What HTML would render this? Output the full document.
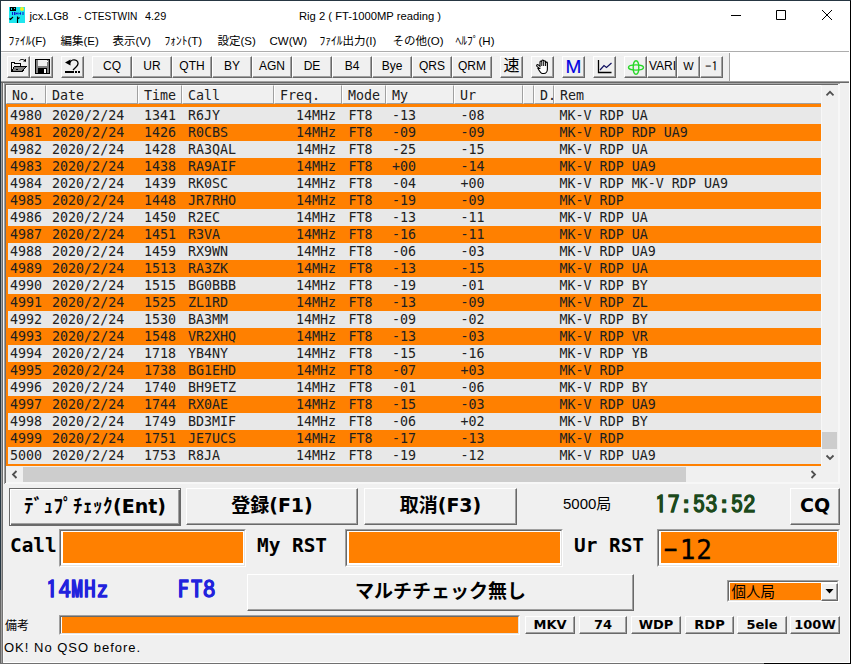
<!DOCTYPE html>
<html lang="ja"><head><meta charset="utf-8"><title>CTESTWIN</title>
<style>
*{box-sizing:border-box;margin:0;padding:0}
html,body{width:851px;height:664px;overflow:hidden;background:#f0f0f0}
body{position:relative;font-family:"Liberation Sans","Noto Sans CJK JP",sans-serif;font-size:12px;color:#000}
.abs{position:absolute}
#frame{position:absolute;left:0;top:0;width:851px;height:664px;border:1px solid #263642;border-right-color:#000;border-bottom-color:#000;pointer-events:none;z-index:50}
#frame2{position:absolute;left:1px;top:1px;width:849px;height:662px;border-right:1px solid #fff;border-bottom:1px solid #fff;z-index:49;pointer-events:none}
#le{position:absolute;left:1px;top:83px;width:3px;height:579px;background:linear-gradient(90deg,#a0a0a0 0 1px,#6c6c6c 1px 2px,#f4f4f4 2px 3px)}
#tbhl{position:absolute;left:1px;top:52px;width:729px;height:1px;background:#fff}
#lb{position:absolute;left:0;top:590px;width:4px;height:73px;z-index:60;background:linear-gradient(90deg,#666 0 1px,#a0a0a0 1px 2px,#737373 2px 3px,#fafafa 3px 4px)}
#bb{position:absolute;left:0;top:663px;width:764px;height:1px;z-index:61;background:#707070}
#title{position:absolute;left:1px;top:1px;width:849px;height:30px;background:#fff}
#title .t{position:absolute;top:7px;transform-origin:0 50%;font-size:11.500px;line-height:16px;white-space:pre;color:#000}
#menu{position:absolute;left:1px;top:31px;width:849px;height:20px;background:#fff}
#menu span{position:absolute;top:2px;line-height:16px;font-size:11.500px;transform-origin:0 50%;transform:translateX(0.500px);white-space:pre;color:#000}
#tbline{position:absolute;left:1px;top:51px;width:849px;height:1px;background:#adadad}
.tb{position:absolute;top:56px;height:22px;background:#f0f0f0;border:1px solid;border-color:#fff #696969 #696969 #fff;box-shadow:inset -1px -1px 0 #a0a0a0;font-size:12px;line-height:18px;text-align:center;color:#000;white-space:nowrap;overflow:hidden}
.ic{position:absolute;display:block;line-height:0}
#tbbg{position:absolute;left:1px;top:52px;width:729px;height:29px;background:#f0f0f0;border-right:1px solid #a0a0a0}
/* list */
#tbw{position:absolute;left:730px;top:52px;width:119px;height:29px;background:#fff}
#ln1{position:absolute;left:1px;top:81px;width:848px;height:2px;background:linear-gradient(#a0a0a0 50%,#686868 50%)}
#list{position:absolute;left:4px;top:83px;width:836px;height:401px;background:#f7f7f7;border-left:1px solid #a0a0a0;border-top:1px solid #a8a8a8}
#list2{position:absolute;left:5px;top:84px;width:833px;height:399px;background:#f7f7f7;border-left:1px solid #6c6c6c;border-top:1px solid #686868}
#lv{position:absolute;left:6px;top:85px;width:815px;height:381px;background:#ff8000;overflow:hidden;font-family:"DejaVu Sans Mono","Liberation Mono",monospace;font-size:13.33px;color:#202020}
#hdr{position:absolute;left:0;top:0;width:816px;height:19px;background:#f0f0f0}
.hc{position:absolute;top:0;height:19px;background:#f0f0f0;border:1px solid;border-color:#fff #a0a0a0 #a0a0a0 #fff;padding-left:5px;line-height:20px;white-space:pre;overflow:hidden}
.r{position:absolute;left:0;width:816px;height:17px;line-height:17px;white-space:pre}
.r.g{background:linear-gradient(#e8e8e8,#e8e8e8) 2px 0/100% 100% no-repeat}
.r span{position:absolute;top:0}
#vs{position:absolute;left:822px;top:85px;width:16px;height:381px;background:#f0f0f0}
#hs{position:absolute;left:6px;top:466px;width:816px;height:16px;background:#f0f0f0}
#corner{position:absolute;left:822px;top:466px;width:16px;height:16px;background:#f0f0f0}
.btn{position:absolute;background:#f0f0f0;border:1px solid;border-color:#fff #696969 #696969 #fff;box-shadow:inset -1px -1px 0 #a0a0a0,inset 1px 1px 0 #f0f0f0;text-align:center;white-space:nowrap;color:#000}
.big{font-family:"DejaVu Sans","Noto Sans CJK JP",sans-serif;font-weight:bold;font-size:19px}
.lab{position:absolute;font-family:"DejaVu Sans Mono","Liberation Mono",monospace;font-weight:bold;font-size:19.400px;line-height:24px;white-space:pre;color:#000}
.clk{font-family:"IPAGothic","Liberation Mono",monospace;font-weight:bold;font-size:23.500px;line-height:30px;white-space:pre;letter-spacing:0.900px;-webkit-text-stroke:0.250px currentColor}
.edit{position:absolute;background:#fff;border:1px solid;border-color:#a0a0a0 #fff #fff #a0a0a0}
.edit i{position:absolute;left:0;top:0;right:0;bottom:0;border:1px solid;border-color:#696969 #e3e3e3 #e3e3e3 #696969;display:block}
.edit b{position:absolute;background:#ff8000;display:block}
.sb{position:absolute;top:616px;height:18px;font-family:"DejaVu Sans","Liberation Sans",sans-serif;font-weight:bold;font-size:13px;line-height:15px}
</style></head><body>
<div id="title">
 <svg class="abs" style="left:8px;top:6px" width="16" height="16" viewBox="0 0 16 16"><rect width="16" height="16" fill="#1ee6ee"/><rect x="1" y="0" width="6" height="4" fill="#000"/><rect x="2" y="1" width="1" height="2" fill="#1ee6ee"/><rect x="5" y="1" width="1" height="1" fill="#1ee6ee"/><circle cx="13" cy="2" r="2" fill="#f0f020"/><path d="M3 5h1v3h-1zM5 5h1v3h-1zM6.500 5l2 1.500-2 1.500zM8.500 5.500h1v2h-1zM12 5l-2 1.500 2 1.500zM13.500 5h1v3h-1z" fill="#1010d0"/><path d="M0.5 11.5l1 1 2.5-2.5M8.5 9.5v6.5M8.5 12l2-1.5" stroke="#000" stroke-width="1.1" fill="none"/></svg>
 <span class="t" id="t1" style="left:28.500px">jcx.LG8</span><span class="t" id="t2" style="left:77.300px;transform:scaleX(0.885)">- CTESTWIN</span><span class="t" id="t3" style="left:143.700px;transform:scaleX(0.95)">4.29</span>
 <span class="t" id="t4" style="left:297.500px;transform:scaleX(0.976)">Rig 2 ( FT-1000MP reading )</span>
 <svg class="abs" style="left:711px;top:0" width="138" height="30" viewBox="0 0 138 30"><path d="M19 14.500h10M64.500 9.500h9v9h-9zM110 9l10 10M120 9l-10 10" stroke="#000" stroke-width="1" fill="none"/></svg>
</div>
<div id="menu">
 <span style="left:7px">ﾌｧｲﾙ(F)</span><span style="left:59px">編集(E)</span><span style="left:111px">表示(V)</span><span style="left:163px">ﾌｫﾝﾄ(T)</span><span style="left:216px">設定(S)</span><span style="left:268px">CW(W)</span><span style="left:318px">ﾌｧｲﾙ出力(I)</span><span style="left:391px">その他(O)</span><span style="left:454px">ﾍﾙﾌﾟ(H)</span>
</div>
<div id="tbline"></div>
<!-- toolbar -->
<div id="tbbg"></div>
<div class="tb" style="left:7px;width:23px"><span class="ic" style="left:3px;top:2px"><svg width="16" height="16" viewBox="0 0 16 16" shape-rendering="crispEdges"><path d="M0.5 12.5v-9h3v1h6v3" stroke="#000" fill="none"/><path d="M0.5 12.5l3-5h12l-4.5 5z" fill="#808080" stroke="#000"/><rect x="5" y="10" width="2" height="1" fill="#000"/><path d="M8.5 1.5c2-2 5-1 6 1" stroke="#000" fill="none" shape-rendering="auto"/><path d="M12 2.5h3v-3z" fill="#000" shape-rendering="auto"/></svg></span></div>
<div class="tb" style="left:30px;width:23px"><span class="ic" style="left:4px;top:2px"><svg width="16" height="16" viewBox="0 0 16 16" shape-rendering="crispEdges"><rect x="0.5" y="0.5" width="14" height="14" fill="#808080" stroke="#000"/><rect x="3" y="1" width="9" height="6" fill="#f0f0f0"/><rect x="12" y="2" width="1" height="1" fill="#fff"/><rect x="3" y="9" width="9" height="5" fill="#000"/><rect x="9" y="10" width="2" height="4" fill="#fff"/></svg></span></div>
<div class="tb" style="left:61px;width:23px"><span class="ic" style="left:3px;top:2px"><svg width="16" height="16" viewBox="0 0 16 16"><path d="M0 3.5l5.5-3v6z" fill="#000"/><path d="M5 3.5c1-2.5 4-3.5 6.500-2c2.500 2 1.500 4.500 0 6l-3.500 3.500" stroke="#000" stroke-width="1.3" fill="none"/><rect x="0" y="12" width="9" height="2" fill="#000"/><rect x="10" y="12" width="2" height="2" fill="#000"/><rect x="13" y="12" width="2" height="2" fill="#000"/></svg></span></div>
<div class="tb" style="left:92px;width:40px">CQ</div>
<div class="tb" style="left:132px;width:40px">UR</div>
<div class="tb" style="left:172px;width:40px">QTH</div>
<div class="tb" style="left:212px;width:40px">BY</div>
<div class="tb" style="left:252px;width:40px">AGN</div>
<div class="tb" style="left:292px;width:40px">DE</div>
<div class="tb" style="left:332px;width:40px">B4</div>
<div class="tb" style="left:372px;width:40px">Bye</div>
<div class="tb" style="left:412px;width:40px">QRS</div>
<div class="tb" style="left:452px;width:40px">QRM</div>
<div class="tb" style="left:500px;width:23px;font-size:16px;line-height:18px;font-family:'Liberation Sans','Noto Sans CJK JP',sans-serif">速</div>
<div class="tb" style="left:531px;width:23px"><span class="ic" style="left:3px;top:2px"><svg width="16" height="16" viewBox="0 0 16 16"><path d="M4.500 9.500l-2.500-2.200c-1-1 0.300-2.200 1.300-1.400l1.700 1.400v-4.300c0-1.300 1.800-1.300 1.800 0v-1c0-1.300 1.900-1.300 1.900 0v0.700c0-1.300 1.900-1.300 1.900 0v1.300c0-1.200 1.800-1.200 1.800 0v6c0 2.500-1.500 4.500-3.500 4.500h-1.500c-1.500 0-2.500-1.500-4.400-5z" fill="#fff" stroke="#000" stroke-width="1.1"/><path d="M6.800 3v4M8.700 2.700v4.300M10.600 3.500v3.500" stroke="#000" stroke-width="1"/></svg></span></div>
<div class="tb" style="left:562px;width:23px;font-size:19px;line-height:19px;color:#0000e0;-webkit-text-stroke:0.150px #0000e0">M</div>
<div class="tb" style="left:593px;width:23px"><span class="ic" style="left:3px;top:3px"><svg width="16" height="16" viewBox="0 0 16 16"><path d="M1.500 0v12.500h13" stroke="#000" stroke-width="1.3" fill="none"/><path d="M3 10l4-4.500 2.500 2 5-4.500" stroke="#101060" stroke-width="1.2" fill="none"/></svg></span></div>
<div class="tb" style="left:624px;width:23px"><span class="ic" style="left:2px;top:3px"><svg width="18" height="16" viewBox="0 0 18 16"><ellipse cx="9" cy="7.500" rx="7.500" ry="2.600" fill="none" stroke="#28d828" stroke-width="1.4"/><ellipse cx="9" cy="7.500" rx="2.800" ry="6.800" fill="none" stroke="#28d828" stroke-width="1.4"/></svg></span></div>
<div class="tb" style="left:647px;width:30px;text-align:left;padding-left:1px">VARI</div>
<div class="tb" style="left:677px;width:23px;font-size:11px;line-height:19px">W</div>
<div class="tb" style="left:700px;width:23px;font-family:'IPAGothic','Liberation Mono',monospace;font-size:13px;line-height:19px">-1</div>
<!-- list -->
<div id="tbw"></div><div id="tbhl"></div><div id="le"></div><div id="ln1"></div><div id="list"></div><div id="list2"></div>
<div id="lv">
<div class="r g" style="top:22px"><span style="left:4px">4980</span><span style="left:46px">2020/2/24</span><span style="left:138px">1341</span><span style="left:182px">R6JY</span><span style="left:290px">14MHz</span><span style="left:342.5px">FT8</span><span style="left:386px">-13</span><span style="left:454.5px">-08</span><span style="left:553.5px">MK-V RDP UA</span></div>
<div class="r o" style="top:39px"><span style="left:4px">4981</span><span style="left:46px">2020/2/24</span><span style="left:138px">1426</span><span style="left:182px">R0CBS</span><span style="left:290px">14MHz</span><span style="left:342.5px">FT8</span><span style="left:386px">-09</span><span style="left:454.5px">-09</span><span style="left:553.5px">MK-V RDP RDP UA9</span></div>
<div class="r g" style="top:56px"><span style="left:4px">4982</span><span style="left:46px">2020/2/24</span><span style="left:138px">1428</span><span style="left:182px">RA3QAL</span><span style="left:290px">14MHz</span><span style="left:342.5px">FT8</span><span style="left:386px">-25</span><span style="left:454.5px">-15</span><span style="left:553.5px">MK-V RDP UA</span></div>
<div class="r o" style="top:73px"><span style="left:4px">4983</span><span style="left:46px">2020/2/24</span><span style="left:138px">1438</span><span style="left:182px">RA9AIF</span><span style="left:290px">14MHz</span><span style="left:342.5px">FT8</span><span style="left:386px">+00</span><span style="left:454.5px">-14</span><span style="left:553.5px">MK-V RDP UA9</span></div>
<div class="r g" style="top:90px"><span style="left:4px">4984</span><span style="left:46px">2020/2/24</span><span style="left:138px">1439</span><span style="left:182px">RK0SC</span><span style="left:290px">14MHz</span><span style="left:342.5px">FT8</span><span style="left:386px">-04</span><span style="left:454.5px">+00</span><span style="left:553.5px">MK-V RDP MK-V RDP UA9</span></div>
<div class="r o" style="top:107px"><span style="left:4px">4985</span><span style="left:46px">2020/2/24</span><span style="left:138px">1448</span><span style="left:182px">JR7RHO</span><span style="left:290px">14MHz</span><span style="left:342.5px">FT8</span><span style="left:386px">-19</span><span style="left:454.5px">-09</span><span style="left:553.5px">MK-V RDP</span></div>
<div class="r g" style="top:124px"><span style="left:4px">4986</span><span style="left:46px">2020/2/24</span><span style="left:138px">1450</span><span style="left:182px">R2EC</span><span style="left:290px">14MHz</span><span style="left:342.5px">FT8</span><span style="left:386px">-13</span><span style="left:454.5px">-11</span><span style="left:553.5px">MK-V RDP UA</span></div>
<div class="r o" style="top:141px"><span style="left:4px">4987</span><span style="left:46px">2020/2/24</span><span style="left:138px">1451</span><span style="left:182px">R3VA</span><span style="left:290px">14MHz</span><span style="left:342.5px">FT8</span><span style="left:386px">-16</span><span style="left:454.5px">-11</span><span style="left:553.5px">MK-V RDP UA</span></div>
<div class="r g" style="top:158px"><span style="left:4px">4988</span><span style="left:46px">2020/2/24</span><span style="left:138px">1459</span><span style="left:182px">RX9WN</span><span style="left:290px">14MHz</span><span style="left:342.5px">FT8</span><span style="left:386px">-06</span><span style="left:454.5px">-03</span><span style="left:553.5px">MK-V RDP UA9</span></div>
<div class="r o" style="top:175px"><span style="left:4px">4989</span><span style="left:46px">2020/2/24</span><span style="left:138px">1513</span><span style="left:182px">RA3ZK</span><span style="left:290px">14MHz</span><span style="left:342.5px">FT8</span><span style="left:386px">-13</span><span style="left:454.5px">-15</span><span style="left:553.5px">MK-V RDP UA</span></div>
<div class="r g" style="top:192px"><span style="left:4px">4990</span><span style="left:46px">2020/2/24</span><span style="left:138px">1515</span><span style="left:182px">BG0BBB</span><span style="left:290px">14MHz</span><span style="left:342.5px">FT8</span><span style="left:386px">-19</span><span style="left:454.5px">-01</span><span style="left:553.5px">MK-V RDP BY</span></div>
<div class="r o" style="top:209px"><span style="left:4px">4991</span><span style="left:46px">2020/2/24</span><span style="left:138px">1525</span><span style="left:182px">ZL1RD</span><span style="left:290px">14MHz</span><span style="left:342.5px">FT8</span><span style="left:386px">-13</span><span style="left:454.5px">-09</span><span style="left:553.5px">MK-V RDP ZL</span></div>
<div class="r g" style="top:226px"><span style="left:4px">4992</span><span style="left:46px">2020/2/24</span><span style="left:138px">1530</span><span style="left:182px">BA3MM</span><span style="left:290px">14MHz</span><span style="left:342.5px">FT8</span><span style="left:386px">-09</span><span style="left:454.5px">-02</span><span style="left:553.5px">MK-V RDP BY</span></div>
<div class="r o" style="top:243px"><span style="left:4px">4993</span><span style="left:46px">2020/2/24</span><span style="left:138px">1548</span><span style="left:182px">VR2XHQ</span><span style="left:290px">14MHz</span><span style="left:342.5px">FT8</span><span style="left:386px">-13</span><span style="left:454.5px">-03</span><span style="left:553.5px">MK-V RDP VR</span></div>
<div class="r g" style="top:260px"><span style="left:4px">4994</span><span style="left:46px">2020/2/24</span><span style="left:138px">1718</span><span style="left:182px">YB4NY</span><span style="left:290px">14MHz</span><span style="left:342.5px">FT8</span><span style="left:386px">-15</span><span style="left:454.5px">-16</span><span style="left:553.5px">MK-V RDP YB</span></div>
<div class="r o" style="top:277px"><span style="left:4px">4995</span><span style="left:46px">2020/2/24</span><span style="left:138px">1738</span><span style="left:182px">BG1EHD</span><span style="left:290px">14MHz</span><span style="left:342.5px">FT8</span><span style="left:386px">-07</span><span style="left:454.5px">+03</span><span style="left:553.5px">MK-V RDP</span></div>
<div class="r g" style="top:294px"><span style="left:4px">4996</span><span style="left:46px">2020/2/24</span><span style="left:138px">1740</span><span style="left:182px">BH9ETZ</span><span style="left:290px">14MHz</span><span style="left:342.5px">FT8</span><span style="left:386px">-01</span><span style="left:454.5px">-06</span><span style="left:553.5px">MK-V RDP BY</span></div>
<div class="r o" style="top:311px"><span style="left:4px">4997</span><span style="left:46px">2020/2/24</span><span style="left:138px">1744</span><span style="left:182px">RX0AE</span><span style="left:290px">14MHz</span><span style="left:342.5px">FT8</span><span style="left:386px">-15</span><span style="left:454.5px">-03</span><span style="left:553.5px">MK-V RDP UA9</span></div>
<div class="r g" style="top:328px"><span style="left:4px">4998</span><span style="left:46px">2020/2/24</span><span style="left:138px">1749</span><span style="left:182px">BD3MIF</span><span style="left:290px">14MHz</span><span style="left:342.5px">FT8</span><span style="left:386px">-06</span><span style="left:454.5px">+02</span><span style="left:553.5px">MK-V RDP BY</span></div>
<div class="r o" style="top:345px"><span style="left:4px">4999</span><span style="left:46px">2020/2/24</span><span style="left:138px">1751</span><span style="left:182px">JE7UCS</span><span style="left:290px">14MHz</span><span style="left:342.5px">FT8</span><span style="left:386px">-17</span><span style="left:454.5px">-13</span><span style="left:553.5px">MK-V RDP</span></div>
<div class="r g" style="top:362px"><span style="left:4px">5000</span><span style="left:46px">2020/2/24</span><span style="left:138px">1753</span><span style="left:182px">R8JA</span><span style="left:290px">14MHz</span><span style="left:342.5px">FT8</span><span style="left:386px">-19</span><span style="left:454.5px">-12</span><span style="left:553.5px">MK-V RDP UA9</span></div>
<div id="hdr">
<div class="hc" style="left:0px;width:40px">No.</div>
<div class="hc" style="left:40px;width:92px">Date</div>
<div class="hc" style="left:132px;width:44px">Time</div>
<div class="hc" style="left:176px;width:92px">Call</div>
<div class="hc" style="left:268px;width:68px">Freq.</div>
<div class="hc" style="left:336px;width:44px">Mode</div>
<div class="hc" style="left:380px;width:68px">My</div>
<div class="hc" style="left:448px;width:69px">Ur</div>
<div class="hc" style="left:517px;width:11px"></div>
<div class="hc" style="left:528px;width:20px">D.</div>
<div class="hc" style="left:548px;width:268px">Rem</div>
</div>
</div>
<div id="vs"><svg class="abs" style="left:0;top:0" width="16" height="381" viewBox="0 0 16 381"><rect x="0" y="347" width="15" height="17" fill="#cdcdcd"/><path d="M4.500 10.300l3.500-3.500 3.500 3.500M4.500 370.500l3.500 3.500 3.500-3.500" stroke="#505050" stroke-width="1.800" fill="none"/></svg></div><div id="hs"><svg class="abs" style="left:0;top:0" width="816" height="16" viewBox="0 0 816 16"><rect x="17" y="1" width="663" height="15" fill="#cdcdcd"/><path d="M10.500 5l-3.500 3.500 3.500 3.500M805.500 5l3.500 3.500-3.500 3.500" stroke="#505050" stroke-width="1.800" fill="none"/></svg></div><div id="corner"></div>
<!-- bottom -->
<div class="btn big" style="left:9px;top:488px;width:172px;height:38px;line-height:34px;border:1px solid #6a6a6a;box-shadow:inset 1px 1px 0 #fff,inset -1px -1px 0 #696969,inset -2px -2px 0 #a0a0a0"><span style="letter-spacing:0.5px">ﾃﾞｭﾌﾟﾁｪｯｸ</span>(Ent)</div>
<div class="btn big" style="left:186px;top:488px;width:172px;height:37px;line-height:33px">登録(F1)</div>
<div class="btn big" style="left:364px;top:488px;width:153px;height:37px;line-height:33px">取消(F3)</div>
<div class="abs" style="left:563px;top:495px;font-size:15px;line-height:18px;white-space:pre">5000局</div>
<div class="abs clk" style="left:655px;top:489px;color:#1c4a1c">17:53:52</div>
<div class="btn big" style="left:790px;top:488px;width:50px;height:37px;line-height:33px">CQ</div>

<div class="lab" style="left:10px;top:534.400px">Call</div>
<div class="edit" style="left:59px;top:529px;width:187px;height:38px"><i></i><b style="left:3px;top:2px;right:2px;bottom:3px"></b></div>
<div class="lab" style="left:257px;top:534.400px">My RST</div>
<div class="edit" style="left:345px;top:529px;width:218px;height:38px"><i></i><b style="left:3px;top:2px;right:2px;bottom:3px"></b></div>
<div class="lab" style="left:574px;top:534.400px">Ur RST</div>
<div class="edit" style="left:657px;top:529px;width:183px;height:38px"><i></i><b style="left:3px;top:2px;right:2px;bottom:3px"></b><span class="abs" style="left:5.500px;top:4.500px;font-family:'DejaVu Sans Mono','Liberation Mono',monospace;font-size:26px;line-height:30px;letter-spacing:0.700px;color:#000;-webkit-text-stroke:0.300px #000"><span style="display:inline-block;transform:translate(-1px,-2.500px) scaleX(1.700)">-</span>12</span></div>

<div class="abs clk" style="left:46px;top:574.300px;color:#2222dd">14MHz</div>
<div class="abs clk" style="left:178px;top:574.300px;color:#2222dd">FT8</div>
<div class="btn big" style="left:247px;top:574px;width:387px;height:37px;line-height:33px;font-size:19px">マルチチェック無し</div>
<div class="edit" style="left:727px;top:580px;width:112px;height:22px"><i></i><b style="left:2px;top:2px;width:91px;bottom:1.500px"></b><span class="abs" style="left:3.500px;top:1.500px;font-size:14.500px;line-height:18px">個人局</span><span class="abs" style="right:0.500px;top:1.500px;width:17px;height:18px;background:#f0f0f0;border:1px solid;border-color:#fff #696969 #696969 #fff;box-shadow:inset -1px -1px 0 #a0a0a0"><svg class="abs" style="left:3px;top:5px" width="9" height="5" viewBox="0 0 9 5"><path d="M0.500 0h8l-4 4.500z" fill="#000"/></svg></span></div>

<div class="abs" style="left:5px;top:618px;font-size:12px;line-height:16px">備考</div>
<div class="edit" style="left:59px;top:614.500px;width:461px;height:20px"><i></i><b style="left:1.500px;top:1px;right:1px;bottom:1px"></b></div>
<div class="btn sb" style="left:525px;width:50px">MKV</div>
<div class="btn sb" style="left:579px;width:48px">74</div>
<div class="btn sb" style="left:631px;width:50px">WDP</div>
<div class="btn sb" style="left:685px;width:49px">RDP</div>
<div class="btn sb" style="left:737px;width:50px">5ele</div>
<div class="btn sb" style="left:790px;width:50px">100W</div>
<div class="abs" style="left:4px;top:640px;font-size:13px;line-height:16px;white-space:pre;letter-spacing:1px">OK! No QSO before.</div>
<div id="frame2"></div><div id="frame"></div><div id="lb"></div><div id="bb"></div>
</body></html>
